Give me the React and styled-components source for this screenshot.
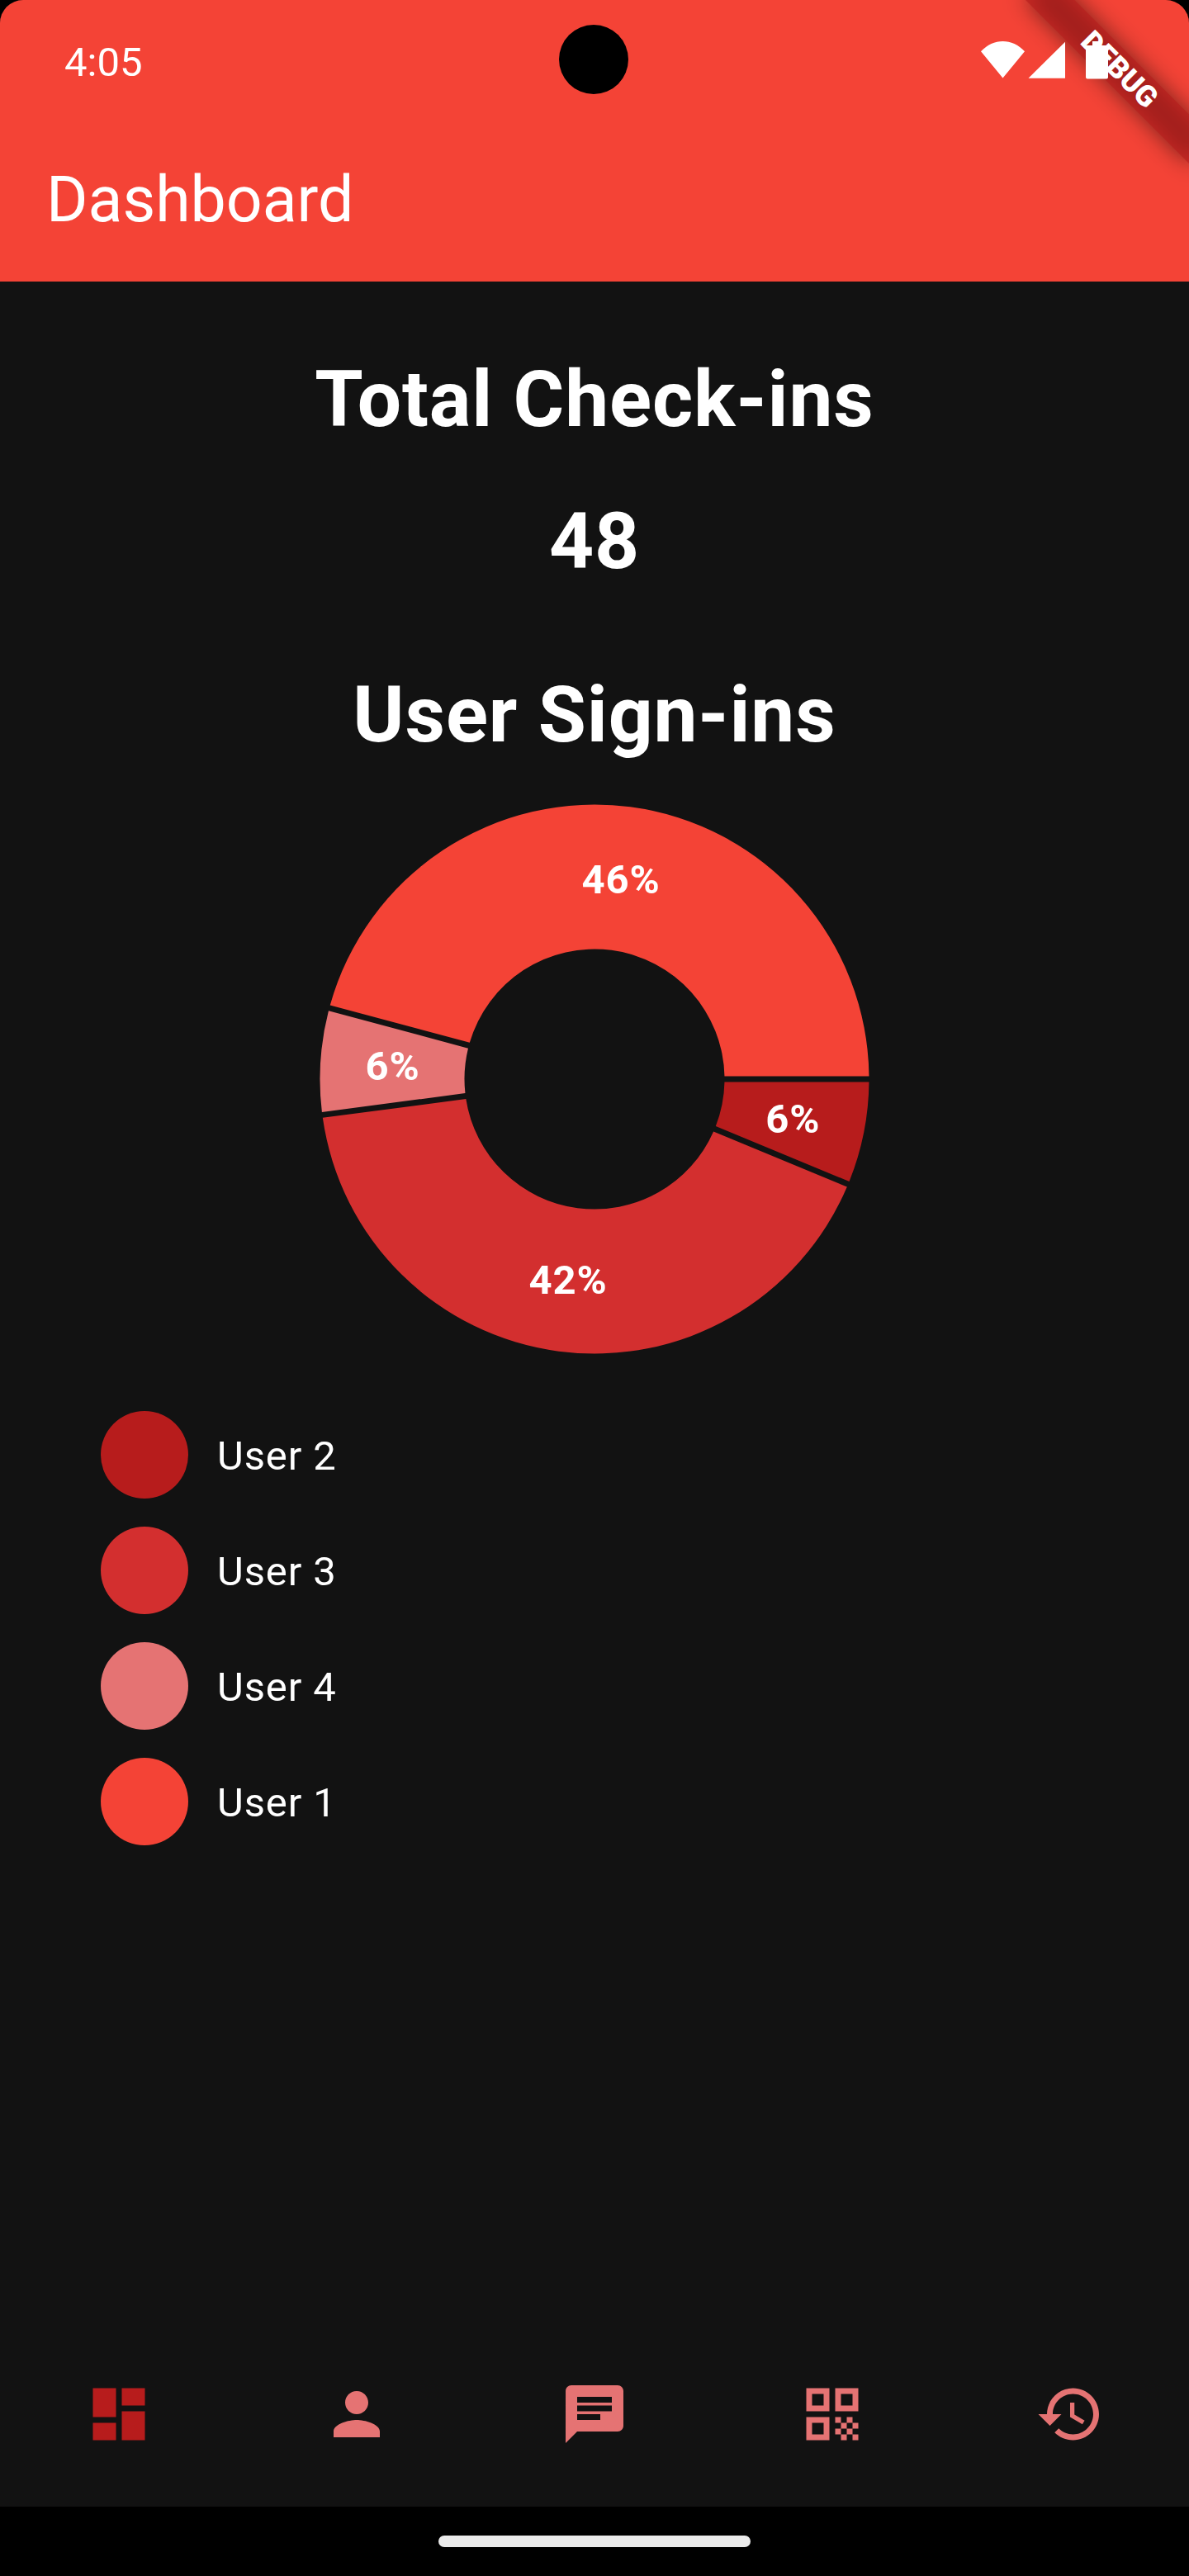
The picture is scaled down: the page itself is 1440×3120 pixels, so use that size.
import React from 'react';
import styled, { createGlobalStyle } from 'styled-components';

const GlobalStyle = createGlobalStyle`
  * { box-sizing: border-box; }
  html, body { margin: 0; background: #000; }
`;

const colors = {
  red: '#f44336',
  red300: '#e57373',
  red700: '#d32f2f',
  red900: '#b71c1c',
  surface: '#121212',
};

const Screen = styled.div`
  position: relative;
  display: flex;
  flex-direction: column;
  width: 1440px;
  height: 3120px;
  overflow: hidden;
  border-radius: 28px 28px 0 0;
  background: ${colors.surface};
  color: #fff;
  font-family: Roboto, 'Noto Sans', sans-serif;
`;

const Header = styled.header`
  display: flex;
  flex-direction: column;
  flex: none;
  height: 341px;
  background: ${colors.red};
`;

const StatusBar = styled.div`
  display: flex;
  align-items: center;
  justify-content: space-between;
  height: 145px;
  padding: 1px 98px 0 78px;
`;

const Clock = styled.span`
  margin-top: 5px;
  font-size: 49px;
  line-height: 58px;
`;

const StatusIcons = styled.svg`
  position: relative;
  z-index: 3;
  display: block;
  width: 154px;
  height: 46px;
  fill: #fff;
`;

const Toolbar = styled.div`
  display: flex;
  align-items: center;
  height: 196px;
  padding: 0 56px 3px;
`;

const ToolbarTitle = styled.h1`
  margin: 0;
  font-size: 77px;
  font-weight: 400;
  line-height: 98px;
`;

const Camera = styled.div`
  position: absolute;
  z-index: 4;
  top: 30px;
  left: 677px;
  width: 84px;
  height: 84px;
  border-radius: 50%;
  background: #000;
`;

const BannerAnchor = styled.div`
  position: absolute;
  z-index: 2;
  top: 0;
  left: 1440px;
  width: 0;
  height: 0;
  transform: rotate(45deg);
`;

const BannerShadow = styled.div`
  position: absolute;
  top: 98px;
  left: -140px;
  width: 280px;
  height: 42px;
  background: rgba(0, 0, 0, 0.5);
  filter: blur(13.9px);
`;

const BannerRibbon = styled.div`
  position: absolute;
  top: 98px;
  left: -140px;
  display: flex;
  align-items: center;
  justify-content: center;
  width: 280px;
  height: 42px;
  background: rgba(183, 28, 28, 0.63);
  font-size: 35.7px;
  font-weight: 900;
  line-height: 42px;
`;

const Content = styled.main`
  display: flex;
  flex: 1;
  flex-direction: column;
  align-items: center;
  padding-top: 84px;
`;

const Heading = styled.h2`
  margin: ${({ $top }) => $top}px 0 0;
  font-size: 94.5px;
  font-weight: 700;
  line-height: 118px;
  letter-spacing: 0.875px;
  white-space: nowrap;
`;

const Chart = styled.svg`
  display: block;
  flex: none;
  width: 700px;
  height: 700px;
  margin-top: 32px;
`;

const SliceLabel = styled.text`
  fill: #fff;
  font-family: Roboto, 'Noto Sans', sans-serif;
  font-size: 49px;
  font-weight: 700;
  letter-spacing: 0.875px;
  text-anchor: middle;
`;

const Legend = styled.ul`
  display: flex;
  flex-direction: column;
  align-self: stretch;
  gap: 35px;
  margin: 52px 0 0;
  padding: 0 0 0 122px;
  list-style: none;
`;

const LegendItem = styled.li`
  display: flex;
  align-items: center;
  gap: 35px;
  height: 105px;
  font-size: 49px;
  line-height: 70px;
  letter-spacing: 0.875px;
`;

const LegendLabel = styled.span`
  padding-top: 4px;
`;

const Swatch = styled.span`
  width: 106px;
  height: 106px;
  border-radius: 50%;
  background: ${({ $color }) => $color};
`;

const NavBar = styled.nav`
  display: grid;
  flex: none;
  grid-template-columns: repeat(5, 1fr);
  justify-items: center;
  height: 196px;
  padding-top: 42px;
  background: ${colors.surface};
`;

const NavIcon = styled.svg`
  display: block;
  width: 84px;
  height: 84px;
  fill: ${({ $active }) => ($active ? colors.red900 : colors.red300)};
`;

const GestureBar = styled.footer`
  display: flex;
  flex: none;
  justify-content: center;
  height: 84px;
  padding-top: 35px;
  background: #000;
`;

const GesturePill = styled.div`
  width: 378px;
  height: 14px;
  border-radius: 7px;
  background: #ebebeb;
`;

const slices = [
  { name: 'User 2', count: 3, label: '6%', color: colors.red900 },
  { name: 'User 3', count: 20, label: '42%', color: colors.red700 },
  { name: 'User 4', count: 3, label: '6%', color: colors.red300 },
  { name: 'User 1', count: 22, label: '46%', color: colors.red },
];

const OUTER = 332.5;
const INNER = 157.5;
const HALF_GAP = 3.5;

function arcPoint(radius, angle) {
  return `${(radius * Math.cos(angle)).toFixed(3)} ${(radius * Math.sin(angle)).toFixed(3)}`;
}

// Insets both straight edges by the same distance, so the gaps stay parallel.
function slicePath(start, end) {
  const outerInset = Math.asin(HALF_GAP / OUTER);
  const innerInset = Math.asin(HALF_GAP / INNER);
  const large = end - start > Math.PI ? 1 : 0;
  return [
    `M${arcPoint(OUTER, start + outerInset)}`,
    `A${OUTER} ${OUTER} 0 ${large} 1 ${arcPoint(OUTER, end - outerInset)}`,
    `L${arcPoint(INNER, end - innerInset)}`,
    `A${INNER} ${INNER} 0 ${large} 0 ${arcPoint(INNER, start + innerInset)}Z`,
  ].join('');
}

function DonutChart() {
  const total = slices.reduce((sum, slice) => sum + slice.count, 0);
  const radius = (OUTER + INNER) / 2;
  let angle = 0;
  return (
    <Chart viewBox="-350 -350 700 700">
      {slices.map((slice) => {
        const start = angle;
        const end = start + (slice.count / total) * Math.PI * 2;
        const middle = (start + end) / 2;
        angle = end;
        return (
          <g key={slice.name}>
            <path d={slicePath(start, end)} fill={slice.color} />
            <SliceLabel x={radius * Math.cos(middle)} y={radius * Math.sin(middle) + 17.5}>
              {slice.label}
            </SliceLabel>
          </g>
        );
      })}
    </Chart>
  );
}

const navIcons = [
  { name: 'dashboard', d: 'M3 13h8V3H3v10zm0 8h8v-6H3v6zm10 0h8V11h-8v10zm0-18v6h8V3h-8z' },
  {
    name: 'person',
    d: 'M12 12c2.21 0 4-1.79 4-4s-1.79-4-4-4-4 1.79-4 4 1.79 4 4 4zm0 2c-2.67 0-8 1.34-8 4v2h16v-2c0-2.66-5.33-4-8-4z',
  },
  {
    name: 'chat',
    d: 'M20 2H4c-1.1 0-1.99.9-1.99 2L2 22l4-4h14c1.1 0 2-.9 2-2V4c0-1.1-.9-2-2-2zM6 9h12v2H6V9zm8 5H6v-2h8v2zm4-6H6V6h12v2z',
  },
  {
    name: 'qr code',
    d: 'M3 11h8V3H3v8zm2-6h4v4H5V5zM3 21h8v-8H3v8zm2-6h4v4H5v-4zM13 3v8h8V3h-8zm6 6h-4V5h4v4zM19 19h2v2h-2zM13 13h2v2h-2zM15 15h2v2h-2zM13 17h2v2h-2zM15 19h2v2h-2zM17 17h2v2h-2zM17 13h2v2h-2zM19 15h2v2h-2z',
  },
  {
    name: 'history',
    d: 'M13 3c-4.97 0-9 4.03-9 9H1l4 3.99L9 12H6c0-3.87 3.13-7 7-7s7 3.13 7 7-3.13 7-7 7c-1.93 0-3.68-.79-4.94-2.06l-1.42 1.42C8.27 19.99 10.51 21 13 21c4.97 0 9-4.03 9-9s-4.03-9-9-9zm-1 5v5l4.25 2.52.77-1.28-3.52-2.09V8z',
  },
];

export default function App() {
  return (
    <>
      <GlobalStyle />
      <Screen>
        <Header>
          <StatusBar>
            <Clock>4:05</Clock>
            <StatusIcons viewBox="1188 50 154 46">
              <path d="M1188 62.3C1195.5 54 1205 50 1214.5 50S1233.5 54 1241 62.3L1214.5 94.5Z" />
              <path d="M1245.5 94.7H1290V50.7Z" />
              <path d="M1323 50h11v5h6a2 2 0 0 1 2 2v36.5a2 2 0 0 1-2 2h-23a2 2 0 0 1-2-2V57a2 2 0 0 1 2-2h6z" />
            </StatusIcons>
          </StatusBar>
          <Toolbar>
            <ToolbarTitle>Dashboard</ToolbarTitle>
          </Toolbar>
        </Header>
        <Content>
          <Heading $top={0}>Total Check-ins</Heading>
          <Heading $top={54}>48</Heading>
          <Heading $top={92}>User Sign-ins</Heading>
          <DonutChart />
          <Legend>
            {slices.map((slice) => (
              <LegendItem key={slice.name}>
                <Swatch $color={slice.color} />
                <LegendLabel>{slice.name}</LegendLabel>
              </LegendItem>
            ))}
          </Legend>
        </Content>
        <NavBar>
          {navIcons.map((icon, index) => (
            <NavIcon key={icon.name} viewBox="0 0 24 24" $active={index === 0}>
              <path d={icon.d} />
            </NavIcon>
          ))}
        </NavBar>
        <GestureBar>
          <GesturePill />
        </GestureBar>
        <BannerAnchor>
          <BannerShadow />
          <BannerRibbon>DEBUG</BannerRibbon>
        </BannerAnchor>
        <Camera />
      </Screen>
    </>
  );
}
